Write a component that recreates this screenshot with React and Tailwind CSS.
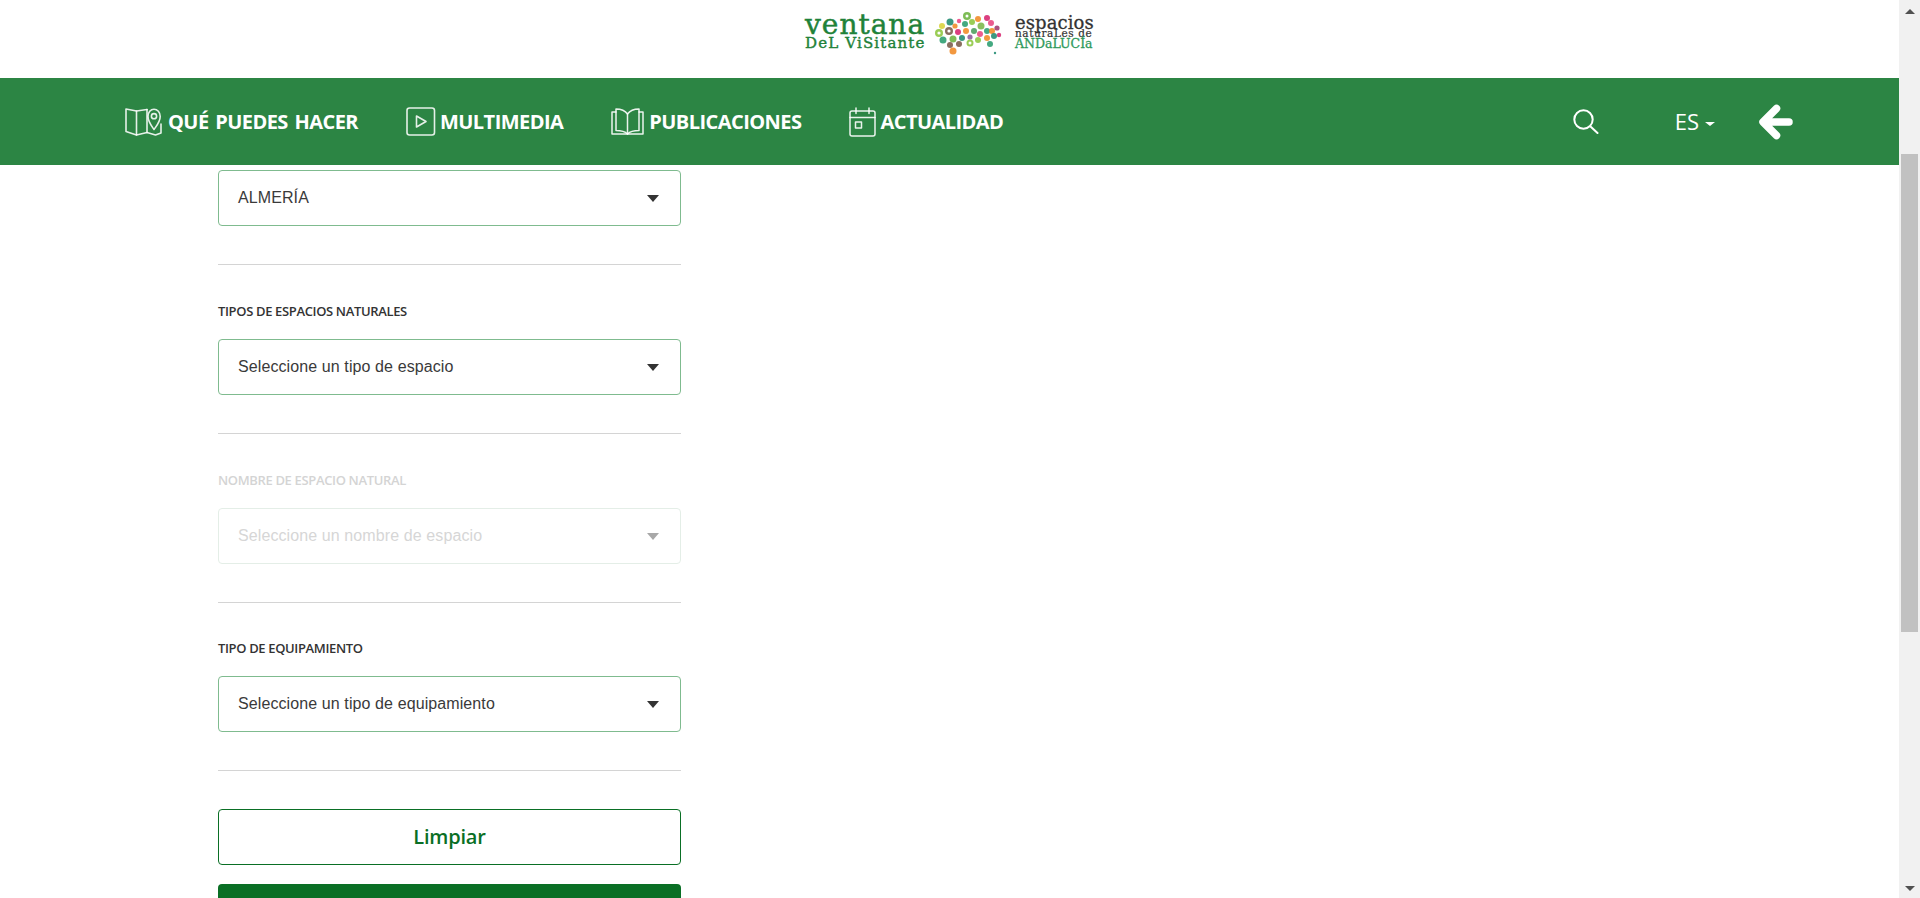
import React from "react";

const openSans = "font-['Open_Sans',sans-serif]";

function MapIcon() {
  return (
    <svg width="37" height="28" viewBox="0 0 37 28" fill="none" stroke="#fff" strokeOpacity="0.88" strokeWidth="1.6" strokeLinejoin="round" strokeLinecap="round" className="shrink-0">
      <path d="M22 1.5 L11.5 3 L1 1 V23.5 L11.5 27 L22 24.5 L30.5 27 L36 25 V16" />
      <path d="M11.5 3 V27 M22 1.5 V24.5" />
      <path d="M29 21.5 C25.5 16.5 23 13.5 23 8.5 C23 4.3 25.6 1.2 29 1.2 C32.4 1.2 35.2 4.3 35.2 8.5 C35.2 13.5 32.5 16.5 29 21.5 Z" fill="#2c8544" />
      <circle cx="29" cy="8.2" r="2.6" />
    </svg>
  );
}

function PlayIcon() {
  return (
    <svg width="30" height="29" viewBox="0 0 30 29" fill="none" stroke="#fff" strokeOpacity="0.88" strokeWidth="1.6" strokeLinejoin="round" className="shrink-0">
      <rect x="1" y="1" width="27.5" height="27" rx="2.5" />
      <path d="M10.5 9 L20 14.5 L10.5 20 Z" />
    </svg>
  );
}

function BookIcon() {
  return (
    <svg width="33" height="27" viewBox="0 0 33 27" fill="none" stroke="#fff" strokeOpacity="0.9" strokeWidth="1.5" strokeLinejoin="round" strokeLinecap="round" className="shrink-0">
      <path d="M5 4 H1 V26 H32 V4 H28" />
      <path d="M16.5 6 C14 2.5 10 1 5 1 V22.5 C10 22.5 14 23.5 16.5 26 C19 23.5 23 22.5 28 22.5 V1 C23 1 19 2.5 16.5 6 Z" />
      <path d="M16.5 6 V26" />
    </svg>
  );
}

function CalendarIcon() {
  return (
    <svg width="27" height="30" viewBox="0 0 27 30" fill="none" stroke="#fff" strokeOpacity="0.9" strokeWidth="1.5" strokeLinecap="round" strokeLinejoin="round" className="shrink-0">
      <rect x="1" y="4" width="25" height="25" rx="2" />
      <path d="M1 10.5 H26 M7 1 V6.5 M20 1 V6.5" />
      <rect x="6.5" y="15" width="6" height="6" />
    </svg>
  );
}

function SearchIcon() {
  return (
    <svg width="26" height="25" viewBox="0 0 26 25" fill="none" stroke="#fff" strokeWidth="2" strokeLinecap="round" className="shrink-0">
      <circle cx="10.5" cy="10.5" r="9.2" />
      <path d="M17.5 17.5 L24.5 24" />
    </svg>
  );
}

function BackArrow() {
  return (
    <svg width="35" height="36" viewBox="0 0 35 36" fill="none" stroke="#fff" strokeWidth="7.5" strokeLinecap="round" strokeLinejoin="round" className="shrink-0">
      <path d="M18.5 4.5 L5 18 L18.5 31.5 M6 18 H31" />
    </svg>
  );
}

const BLOBS = [
  [33, 4, 4, "#6cb33f"], [25, 9, 2.2, "#e8457f"], [31, 12, 3, "#2a9d6f"], [38, 10, 3, "#8cc63f"],
  [44, 7, 3, "#f08a24"], [53, 6, 3, "#d6246e"], [57, 11, 3, "#e8457f"], [16, 10, 3.5, "#1f8a70"],
  [47, 14, 3.5, "#7ab648"], [53, 19, 3, "#2a9d6f"], [8, 14, 3, "#d8d23a"], [21, 14, 2.6, "#f08a24"],
  [5, 21, 4, "#8cc63f"], [15, 19, 4, "#7a5a4a"], [24, 20, 3, "#d6246e"], [32, 19, 3, "#f08a24"],
  [40, 19, 3, "#4a9e5c"], [46, 22, 3, "#e8457f"], [58, 19, 3, "#f08a24"], [63, 16, 2.6, "#a03a6e"],
  [9, 28, 3.5, "#2a9d6f"], [19, 27, 3.5, "#6cb33f"], [28, 26, 3, "#1f8a70"], [36, 25, 2.6, "#8b5a9a"],
  [44, 28, 3, "#8cc63f"], [53, 26, 3, "#f08a24"], [60, 24, 3, "#1f8a70"], [65, 23, 2.2, "#d6246e"],
  [16, 33, 3, "#7a5a4a"], [25, 32, 3, "#7a5a4a"], [36, 31, 3.5, "#8cc63f"], [56, 32, 3, "#2a9d6f"],
  [19, 39, 3.5, "#f08a24"], [61, 41, 1.2, "#1f8a70"],
];

function MapLogo() {
  return (
    <svg width="69" height="44" viewBox="0 0 69 44" className="shrink-0">
      {BLOBS.map(([x, y, r, c], i) => (
        <circle key={i} cx={x} cy={y} r={r} fill={c} fillOpacity="0.88" />
      ))}
      <circle cx="15" cy="19" r="1.6" fill="#fff" />
      <circle cx="5" cy="21" r="1.6" fill="#fff" />
      <circle cx="33" cy="4" r="1.5" fill="#fff" />
      <circle cx="36" cy="31" r="1.5" fill="#fff" />
    </svg>
  );
}

function Logo() {
  return (
    <div className="h-[78px] shrink-0 flex items-start pt-[13px] pl-[805px]">
      <div className="w-[118px] flex flex-col font-['DejaVu_Serif',serif] text-[#1f8239]">
        <span className="text-[28px] leading-[24px] h-[23px] tracking-[1px] whitespace-nowrap [-webkit-text-stroke:0.5px_#1f8239]">ventana</span>
        <span className="text-[15px] leading-[14px] tracking-[1.15px] whitespace-nowrap [-webkit-text-stroke:0.4px_#1f8239]">DeL ViSitante</span>
      </div>
      <div className="ml-[11px] -mt-[1px]"><MapLogo /></div>
      <div className="ml-[12px] w-[80px] flex flex-col font-['DejaVu_Serif',serif]">
        <span className="text-[18px] leading-[17px] mt-[1px] h-[15px] text-[#333333] tracking-[0.1px] whitespace-nowrap [-webkit-text-stroke:0.3px_#333333]">espacios</span>
        <span className="text-[10.5px] leading-[8px] text-[#333333] tracking-[0.6px] whitespace-nowrap [-webkit-text-stroke:0.2px_#333333]">naturaLes de</span>
        <span className="text-[12.5px] leading-[13px] text-[#2f9a5c] whitespace-nowrap [-webkit-text-stroke:0.3px_#2f9a5c]">ANDaLUCÍa</span>
      </div>
    </div>
  );
}

function NavItem({ icon, label, className, gap }) {
  return (
    <a className={`flex items-center ${gap} ${className}`}>
      {icon}
      <span className={`${openSans} text-[20px] font-bold tracking-[-0.55px] [word-spacing:2px] text-white whitespace-nowrap`}>{label}</span>
    </a>
  );
}

function Nav() {
  return (
    <nav className="h-[87px] shrink-0 bg-[#2c8544] flex items-center pl-[125px]">
      <NavItem icon={<MapIcon />} label="QUÉ PUEDES HACER" gap="gap-[6px]" />
      <NavItem icon={<PlayIcon />} label="MULTIMEDIA" gap="gap-[4px]" className="ml-[48px]" />
      <NavItem icon={<BookIcon />} label="PUBLICACIONES" gap="gap-[5px]" className="ml-[48px]" />
      <NavItem icon={<CalendarIcon />} label="ACTUALIDAD" gap="gap-[4px]" className="ml-[48px]" />
      <div className="ml-auto flex items-center pr-[106px]">
        <SearchIcon />
        <span className={`${openSans} ml-[76px] text-[22px] text-white`}>ES</span>
        <span className="ml-[6px] mt-[5px] w-0 h-0 border-x-[5px] border-x-transparent border-t-[4px] border-t-white" />
        <div className="ml-[43px]"><BackArrow /></div>
      </div>
    </nav>
  );
}

function Select({ text, disabled }) {
  return (
    <div className={`h-[56px] rounded-[4px] border flex items-center pl-[19px] pr-[21px] ${disabled ? "border-[#e4eee7]" : "border-[#7fbb8f]"}`}>
      <span className={`font-['Liberation_Sans',sans-serif] text-[16px] mb-[1px] tracking-[0.1px] whitespace-nowrap ${disabled ? "text-[#d6d6d6]" : "text-[#3a3a3a]"}`}>{text}</span>
      <span className={`ml-auto w-0 h-0 border-x-[6px] border-x-transparent border-t-[7px] ${disabled ? "border-t-[#a8a8a8]" : "border-t-[#333333]"}`} />
    </div>
  );
}

function Field({ label, text, disabled, labelTop = "mt-[35px]" }) {
  return (
    <div>
      {label && (
        <div className={`${openSans} h-[23px] ${labelTop} mb-[16px] text-[13px] leading-[23px] font-semibold tracking-[-0.35px] ${disabled ? "text-[#d4d4d4]" : "text-[#333333]"}`}>
          {label}
        </div>
      )}
      <Select text={text} disabled={disabled} />
      <hr className="mt-[38px] border-0 border-t border-[#d4d4d4]" />
    </div>
  );
}

function Scrollbar() {
  return (
    <div className="w-[21px] shrink-0 bg-[#f1f1f1] flex flex-col items-center relative">
      <span className="mt-[9px] w-0 h-0 border-x-[5px] border-x-transparent border-b-[5px] border-b-[#505050]" />
      <div className="mt-[140px] w-[17px] h-[478px] bg-[#c1c1c1]" />
      <span className="mt-auto mb-[7px] w-0 h-0 border-x-[5px] border-x-transparent border-t-[5px] border-t-[#505050]" />
    </div>
  );
}

export default function App() {
  return (
    <div className="h-[898px] flex overflow-hidden bg-white">
      <div className="flex-1 min-w-0 flex flex-col overflow-hidden">
        <Logo />
        <Nav />
        <main className="w-[463px] shrink-0 ml-[218px] pt-[5px]">
          <Field text="ALMERÍA" />
          <Field label="TIPOS DE ESPACIOS NATURALES" text="Seleccione un tipo de espacio" />
          <Field label="NOMBRE DE ESPACIO NATURAL" text="Seleccione un nombre de espacio" disabled />
          <Field label="TIPO DE EQUIPAMIENTO" text="Seleccione un tipo de equipamiento" labelTop="mt-[34px]" />
          <button className={`${openSans} mt-[38px] w-full h-[56px] rounded-[4px] border border-[#0a6f25] text-[#0a6f25] text-[20px] font-semibold tracking-[-0.2px]`}>Limpiar</button>
          <div className="mt-[19px] h-[56px] rounded-[4px] bg-[#0a6f25]" />
        </main>
      </div>
      <Scrollbar />
    </div>
  );
}
